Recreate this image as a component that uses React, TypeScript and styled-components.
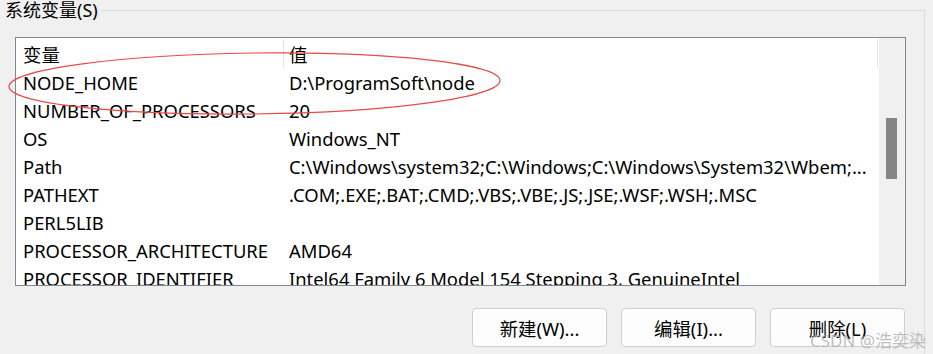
import React from 'react';
import styled, { createGlobalStyle } from 'styled-components';

const GlobalStyle = createGlobalStyle`
  html, body {
    margin: 0;
    padding: 0;
    background: #f0f0f0;
    overflow: hidden;
  }
  body {
    font-family: "Noto Sans", "Noto Sans CJK SC", sans-serif;
    color: #000;
  }
`;

const Page = styled.div`
  position: relative;
  width: 933px;
  height: 354px;
  overflow: hidden;
  background: #f0f0f0;
`;

const Group = styled.div`
  margin-top: 10px;
  width: 924px;
  height: 400px;
  border-top: 1px solid #dcdcdc;
  border-right: 1px solid #dcdcdc;
  display: flex;
  flex-direction: column;
  align-items: flex-start;
`;

const GroupTitle = styled.div`
  margin-top: -11px;
  padding: 0 3px 0 5px;
  background: #f0f0f0;
  font-size: 18px;
  line-height: 20px;
  white-space: nowrap;
`;

const ListBox = styled.div`
  margin: 17px 0 0 15px;
  width: 891px;
  height: 249px;
  box-sizing: border-box;
  border: 1px solid #828790;
  background: #fff;
  display: flex;
  overflow: hidden;
`;

const Table = styled.div`
  flex: 1;
  display: flex;
  flex-direction: column;
  overflow: hidden;
`;

const Row = styled.div<{ $head?: boolean }>`
  display: grid;
  grid-template-columns: 268px 594px;
  flex: none;
  height: ${p => (p.$head ? 30 : 28)}px;
  font-size: 18.4px;
  white-space: nowrap;
`;

const Cell = styled.div<{ $head?: boolean; $first?: boolean }>`
  box-sizing: border-box;
  display: flex;
  align-items: center;
  padding-left: ${p => (p.$first ? 7 : 5)}px;
  padding-top: 1px;
  overflow: hidden;
  border-right: ${p => (p.$head ? '1px solid #e5e5e5' : 'none')};
  margin-top: ${p => (p.$head ? 1 : 0)}px;
`;

const Scrollbar = styled.div`
  width: 26px;
  flex: none;
  background: #f0f0f0;
  padding-top: 80px;
  padding-left: 7px;
  box-sizing: border-box;
`;

const Thumb = styled.div`
  width: 11px;
  height: 61px;
  background: #858585;
`;

const ButtonRow = styled.div`
  margin: 22px 0 0 15px;
  width: 890px;
  display: flex;
  justify-content: flex-end;
  gap: 14px;
`;

const Button = styled.button`
  width: 135px;
  height: 39px;
  box-sizing: border-box;
  border: 1px solid #d0d0d0;
  border-radius: 4px;
  background: #fdfdfd;
  font-family: inherit;
  font-size: 18.4px;
  color: #000;
  padding: 0;
`;

const Watermark = styled.div`
  position: absolute;
  left: 810px;
  top: 330px;
  font-size: 17px;
  line-height: 22px;
  color: rgba(170, 170, 170, 0.75);
  white-space: nowrap;
  pointer-events: none;
`;

const Overlay = styled.svg`
  position: absolute;
  left: 0;
  top: 0;
  pointer-events: none;
`;

const rows: [string, string][] = [
  ['NODE_HOME', 'D:\\ProgramSoft\\node'],
  ['NUMBER_OF_PROCESSORS', '20'],
  ['OS', 'Windows_NT'],
  ['Path', 'C:\\Windows\\system32;C:\\Windows;C:\\Windows\\System32\\Wbem;...'],
  ['PATHEXT', '.COM;.EXE;.BAT;.CMD;.VBS;.VBE;.JS;.JSE;.WSF;.WSH;.MSC'],
  ['PERL5LIB', ''],
  ['PROCESSOR_ARCHITECTURE', 'AMD64'],
  ['PROCESSOR_IDENTIFIER', 'Intel64 Family 6 Model 154 Stepping 3, GenuineIntel'],
];

export default function App() {
  return (
    <Page>
      <GlobalStyle />
      <Group>
        <GroupTitle>系统变量(S)</GroupTitle>
        <ListBox>
          <Table>
            <Row $head>
              <Cell $head $first>变量</Cell>
              <Cell $head>值</Cell>
            </Row>
            {rows.map(([name, value]) => (
              <Row key={name}>
                <Cell $first>{name}</Cell>
                <Cell>{value}</Cell>
              </Row>
            ))}
          </Table>
          <Scrollbar>
            <Thumb />
          </Scrollbar>
        </ListBox>
        <ButtonRow>
          <Button>新建(W)...</Button>
          <Button>编辑(I)...</Button>
          <Button>删除(L)</Button>
        </ButtonRow>
      </Group>
      <Overlay width="933" height="354">
        <ellipse
          cx="254.5"
          cy="83.5"
          rx="245.5"
          ry="30.5"
          fill="none"
          stroke="#e64a4a"
          strokeWidth="1.2"
          transform="rotate(-0.7 254.5 83.5)"
        />
      </Overlay>
      <Watermark>CSDN @浩奕染</Watermark>
    </Page>
  );
}
